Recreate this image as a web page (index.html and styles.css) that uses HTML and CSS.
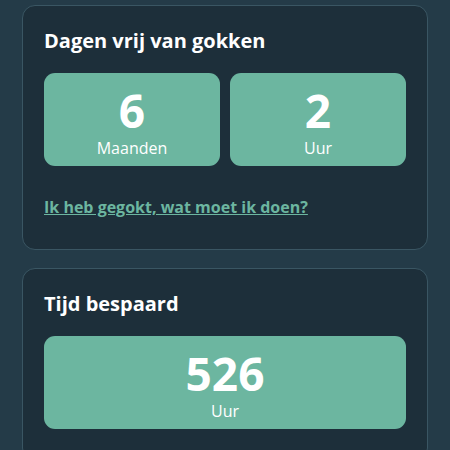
FILE: index.html
```html
<!DOCTYPE html>
<html lang="nl">
<head>
    <meta charset="UTF-8">
    <meta name="viewport" content="width=device-width, initial-scale=1.0">
    <title>Gokvrij</title>
    <link rel="stylesheet" href="styles.css">
</head>
<body>
    <div class="page">
        <section class="card">
            <h2>Dagen vrij van gokken</h2>
            <div class="stats">
                <div class="stat">
                    <span class="value">6</span>
                    <span class="unit">Maanden</span>
                </div>
                <div class="stat">
                    <span class="value">2</span>
                    <span class="unit">Uur</span>
                </div>
            </div>
            <a class="help-link" href="#">Ik heb gegokt, wat moet ik doen?</a>
        </section>

        <section class="card">
            <h2>Tijd bespaard</h2>
            <div class="stats">
                <div class="stat">
                    <span class="value">526</span>
                    <span class="unit">Uur</span>
                </div>
            </div>
        </section>
    </div>
</body>
</html>
```
FILE: styles.css
```css
body {
    margin: 0;
    background: #243b48;
    font-family: "Open Sans", sans-serif;
    color: #fff;
}
.page {
    padding: 5px 22px;
    display: flex;
    flex-direction: column;
    gap: 18px;
}
.card {
    background: #1d2f3a;
    border: 1px solid #3a5663;
    border-radius: 13px;
    padding: 20px 21px 31px;
}
.card h2 {
    margin: 0 0 17px;
    font-size: 20px;
    font-weight: 700;
    line-height: 30px;
}
.stats {
    display: flex;
    gap: 10px;
}
.stat {
    flex: 1;
    background: #6cb6a0;
    border-radius: 11px;
    display: flex;
    flex-direction: column;
    align-items: center;
    gap: 5px;
    padding: 14px 0 8px;
}
.value {
    font-size: 46px;
    font-weight: 700;
    line-height: 46px;
}
.unit {
    font-size: 16px;
    line-height: 20px;
}
.help-link {
    display: block;
    width: fit-content;
    margin-top: 30px;
    color: #6cb6a0;
    font-weight: 700;
    font-size: 16px;
    line-height: 22px;
}
```
